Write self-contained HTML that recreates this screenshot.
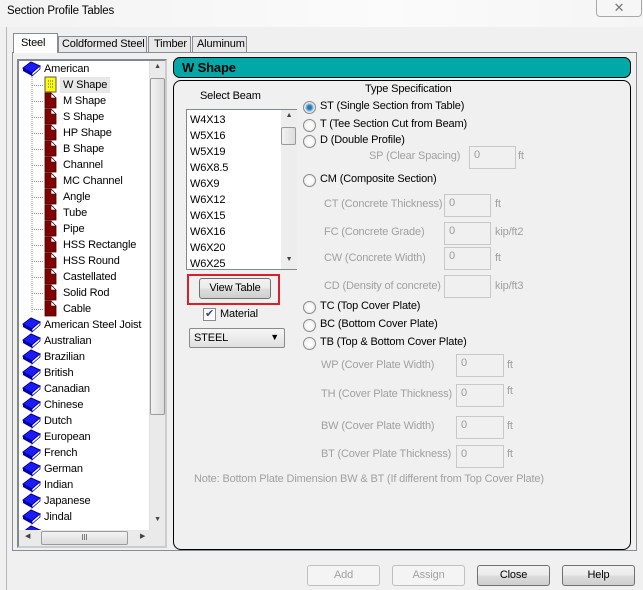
<!DOCTYPE html>
<html><head><meta charset="utf-8"><style>
*{box-sizing:border-box;margin:0;padding:0}
body{width:643px;height:590px;background:#f0f0f0;font-family:"Liberation Sans",Arial,sans-serif;font-size:11px;letter-spacing:-0.15px;color:#000;position:relative;overflow:hidden}
.a{position:absolute;white-space:nowrap}
.g{color:#a0a0a0;z-index:2}
.inp{position:absolute;background:#f0f0f0;border:1px solid #c8c8c8;color:#9a9a9a;padding:2px 4px;height:23px}
.rad{position:absolute;width:13px;height:13px;border-radius:50%;border:1px solid #8a8a8a;background:radial-gradient(circle,#fff 30%,#dcdcdc 100%)}
.btn{position:absolute;height:21px;border:1px solid #707070;border-radius:3px;background:linear-gradient(#f2f2f2,#ebebeb 50%,#dddddd 51%,#cfcfcf);text-align:center;line-height:19px}
.btn.d{border-color:#bfbfbf;background:#f4f4f4;color:#a0a0a0}
.tree div{position:absolute;height:16px;line-height:16px;white-space:nowrap}
</style></head><body>
<div class="a" style="left:0;top:0;width:643px;height:27px;background:linear-gradient(90deg,#f3f3f3,#fbfbfb 60%,#f5f5f5)"></div>
<div class="a" style="left:7px;top:5px;font-size:11.5px">Section Profile Tables</div>
<div class="a" style="left:596px;top:-2px;width:46px;height:19px;border:1px solid #a8a8a8;border-radius:0 0 4px 4px;background:#f6f6f6;text-align:center;line-height:17px;color:#777;font-size:13px">✕</div>
<div class="a" style="left:6px;top:27px;width:1px;height:563px;background:#b8b8b8"></div>

<div class="a" style="left:12px;top:52px;width:625px;height:499px;border:1px solid #898c95;background:#f0f0f0"></div>
<div class="a" style="left:13px;top:33px;width:45px;height:20px;border:1px solid #898c95;border-bottom:none;background:#fff;padding:3px 0 0 7px">Steel</div>
<div class="a" style="left:58px;top:36px;width:89px;height:16px;border:1px solid #898c95;border-bottom:none;background:#e8e8e8;padding:1px 0 0 3px">Coldformed Steel</div>
<div class="a" style="left:148px;top:36px;width:43px;height:16px;border:1px solid #898c95;border-bottom:none;background:#e8e8e8;padding:1px 0 0 5px">Timber</div>
<div class="a" style="left:192px;top:36px;width:55px;height:16px;border:1px solid #898c95;border-bottom:none;background:#e8e8e8;padding:1px 0 0 4px">Aluminum</div>

<div class="a" style="left:17px;top:59px;width:150px;height:489px;border:2px solid #828790;border-right-color:#ccc;border-bottom-color:#ccc;background:#fff;overflow:hidden">
<div class="a" style="left:130px;top:0;width:17px;height:470px;background:#eaeaea;border-left:1px solid #e0e0e0"></div>
<div class="a" style="left:131px;top:2px;width:15px;text-align:center;font-size:7px;color:#444">▲</div>
<div class="a" style="left:131px;top:17px;width:15px;height:337px;border:1px solid #9a9a9a;border-radius:2px;background:linear-gradient(90deg,#f2f2f2,#dcdcdc)"></div>
<div class="a" style="left:131px;top:455px;width:15px;text-align:center;font-size:7px;color:#444">▼</div>
<div class="a" style="left:0;top:469px;width:147px;height:17px;background:#eaeaea"></div>
<div class="a" style="left:22px;top:470px;width:87px;height:14px;border:1px solid #9a9a9a;border-radius:2px;background:linear-gradient(#f2f2f2,#dcdcdc);text-align:center;font-size:8px;line-height:12px;color:#555">III</div>
<div class="a" style="left:6px;top:471px;font-size:7px;color:#444">◀</div>
<div class="a" style="left:121px;top:471px;font-size:7px;color:#444">▶</div>
</div>
<svg class="a" style="left:0;top:0" width="170" height="530">
<defs>
<g id="bk"><path d="M1 7 L9 1 L18 5 L10 12 Z" fill="#1a1aff" stroke="#00008a" stroke-width="1"/><path d="M1 7 L10 12 L10 15 L1 10 Z" fill="#0000a0"/><path d="M10 12 L18 5 L18 8 L10 15Z" fill="#fff" stroke="#00008a" stroke-width=".8"/></g>
<g id="pg"><path d="M0 0 L6 0 L11 5 L11 15 L0 15 Z" fill="#800000" stroke="#400" stroke-width=".8"/><path d="M6 0 L6 5 L11 5 Z" fill="#fff" stroke="#400" stroke-width=".6"/></g>
</defs>
<path d="M32 77 V313" stroke="#999" stroke-dasharray="1 1"/>
<g stroke="#999" stroke-dasharray="1 1">
<path d="M32 85.5H44M32 101.5H44M32 117.5H44M32 133.5H44M32 149.5H44M32 165.5H44M32 181.5H44M32 197.5H44M32 213.5H44M32 229.5H44M32 245.5H44M32 261.5H44M32 277.5H44M32 293.5H44M32 309.5H44"/></g>
<use href="#bk" x="22" y="61"/>
<rect x="45" y="77" width="11" height="15" fill="#ffff00" stroke="#555"/><path d="M48 81h5M48 84h5M48 87h5" stroke="#555" stroke-dasharray="1 1"/>
<use href="#pg" x="45" y="93"/><use href="#pg" x="45" y="109"/><use href="#pg" x="45" y="125"/><use href="#pg" x="45" y="141"/><use href="#pg" x="45" y="157"/><use href="#pg" x="45" y="173"/><use href="#pg" x="45" y="189"/><use href="#pg" x="45" y="205"/><use href="#pg" x="45" y="221"/><use href="#pg" x="45" y="237"/><use href="#pg" x="45" y="253"/><use href="#pg" x="45" y="269"/><use href="#pg" x="45" y="285"/><use href="#pg" x="45" y="301"/>
<use href="#bk" x="22" y="317"/><use href="#bk" x="22" y="333"/><use href="#bk" x="22" y="349"/><use href="#bk" x="22" y="365"/><use href="#bk" x="22" y="381"/><use href="#bk" x="22" y="397"/><use href="#bk" x="22" y="413"/><use href="#bk" x="22" y="429"/><use href="#bk" x="22" y="445"/><use href="#bk" x="22" y="461"/><use href="#bk" x="22" y="477"/><use href="#bk" x="22" y="493"/><use href="#bk" x="22" y="509"/><use href="#bk" x="22" y="525"/>
</svg>
<div class="tree">
<div style="left:44px;top:61px">American</div>
<div style="left:60px;top:77px;background:#e8e8e8;padding:0 3px">W Shape</div>
<div style="left:63px;top:93px">M Shape</div>
<div style="left:63px;top:109px">S Shape</div>
<div style="left:63px;top:125px">HP Shape</div>
<div style="left:63px;top:141px">B Shape</div>
<div style="left:63px;top:157px">Channel</div>
<div style="left:63px;top:173px">MC Channel</div>
<div style="left:63px;top:189px">Angle</div>
<div style="left:63px;top:205px">Tube</div>
<div style="left:63px;top:221px">Pipe</div>
<div style="left:63px;top:237px">HSS Rectangle</div>
<div style="left:63px;top:253px">HSS Round</div>
<div style="left:63px;top:269px">Castellated</div>
<div style="left:63px;top:285px">Solid Rod</div>
<div style="left:63px;top:301px">Cable</div>
<div style="left:44px;top:317px">American Steel Joist</div>
<div style="left:44px;top:333px">Australian</div>
<div style="left:44px;top:349px">Brazilian</div>
<div style="left:44px;top:365px">British</div>
<div style="left:44px;top:381px">Canadian</div>
<div style="left:44px;top:397px">Chinese</div>
<div style="left:44px;top:413px">Dutch</div>
<div style="left:44px;top:429px">European</div>
<div style="left:44px;top:445px">French</div>
<div style="left:44px;top:461px">German</div>
<div style="left:44px;top:477px">Indian</div>
<div style="left:44px;top:493px">Japanese</div>
<div style="left:44px;top:509px">Jindal</div>
</div>

<div class="a" style="left:173px;top:57px;width:458px;height:21px;background:#00a8a8;border:1px solid #000;border-radius:7px;font-weight:bold;font-size:13px;line-height:19px;padding-left:8px">W Shape</div>
<div class="a" style="left:173px;top:80px;width:458px;height:470px;border:1px solid #000;border-radius:8px"></div>

<div class="a" style="left:200px;top:90px">Select Beam</div>
<div class="a" style="left:186px;top:109px;width:111px;height:161px;border:1px solid #828790;background:#fff">
<div class="a" style="left:94px;top:0;width:16px;height:159px;background:#ededed"></div>
<div class="a" style="left:94px;top:2px;width:16px;text-align:center;font-size:7px;color:#444">▲</div>
<div class="a" style="left:94px;top:17px;width:15px;height:18px;border:1px solid #9a9a9a;border-radius:2px;background:linear-gradient(90deg,#f2f2f2,#dcdcdc)"></div>
<div class="a" style="left:94px;top:146px;width:16px;text-align:center;font-size:7px;color:#444">▼</div>
<div class="a" style="left:3px;top:2px;line-height:16px">W4X13<br>W5X16<br>W5X19<br>W6X8.5<br>W6X9<br>W6X12<br>W6X15<br>W6X16<br>W6X20<br>W6X25</div>
</div>
<div class="a" style="left:187px;top:274px;width:93px;height:31px;border:2px solid #d9202a"></div>
<div class="btn" style="left:199px;top:278px;width:72px">View Table</div>
<div class="a" style="left:203px;top:308px;width:13px;height:13px;border:1px solid #8a8a8a;background:#fff;font-size:11px;line-height:11px;text-align:center;color:#2a4a9a">✔</div>
<div class="a" style="left:220px;top:308px">Material</div>
<div class="a" style="left:189px;top:328px;width:96px;height:20px;border:1px solid #8a8a8a;border-radius:2px;background:linear-gradient(#f6f6f6,#e0e0e0);padding:3px 4px">STEEL<span style="position:absolute;right:5px;top:3px;font-size:9px">▼</span></div>

<div class="a" style="left:365px;top:83px">Type Specification</div>
<div class="rad" style="left:303px;top:101px;background:radial-gradient(circle,#2a7ab0 25%,#7fc0e8 45%,#e8e8e8 60%)"></div>
<div class="a" style="left:320px;top:100px">ST (Single Section from Table)</div>
<div class="rad" style="left:303px;top:119px"></div><div class="a" style="left:320px;top:118px">T (Tee Section Cut from Beam)</div>
<div class="rad" style="left:303px;top:135px"></div><div class="a" style="left:320px;top:134px">D (Double Profile)</div>
<div class="a g" style="left:369px;top:150px">SP (Clear Spacing)</div><div class="inp" style="left:469px;top:146px;width:47px">0</div><div class="a g" style="left:518px;top:150px">ft</div>
<div class="rad" style="left:303px;top:174px"></div><div class="a" style="left:320px;top:173px">CM (Composite Section)</div>
<div class="a g" style="left:324px;top:198px">CT (Concrete Thickness)</div><div class="inp" style="left:444px;top:194px;width:47px">0</div><div class="a g" style="left:495px;top:198px">ft</div>
<div class="a g" style="left:324px;top:226px">FC (Concrete Grade)</div><div class="inp" style="left:444px;top:222px;width:47px">0</div><div class="a g" style="left:495px;top:226px">kip/ft2</div>
<div class="a g" style="left:324px;top:252px">CW (Concrete Width)</div><div class="inp" style="left:444px;top:247px;width:47px">0</div><div class="a g" style="left:495px;top:252px">ft</div>
<div class="a g" style="left:324px;top:280px">CD (Density of concrete)</div><div class="inp" style="left:444px;top:275px;width:47px"></div><div class="a g" style="left:495px;top:280px">kip/ft3</div>
<div class="rad" style="left:303px;top:301px"></div><div class="a" style="left:320px;top:300px">TC (Top Cover Plate)</div>
<div class="rad" style="left:303px;top:319px"></div><div class="a" style="left:320px;top:318px">BC (Bottom Cover Plate)</div>
<div class="rad" style="left:303px;top:337px"></div><div class="a" style="left:320px;top:336px">TB (Top &amp; Bottom Cover Plate)</div>
<div class="a g" style="left:321px;top:359px">WP (Cover Plate Width)</div><div class="inp" style="left:456px;top:354px;width:48px">0</div><div class="a g" style="left:507px;top:359px">ft</div>
<div class="a g" style="left:321px;top:388px">TH (Cover Plate Thickness)</div><div class="inp" style="left:456px;top:384px;width:48px">0</div><div class="a g" style="left:507px;top:385px">ft</div>
<div class="a g" style="left:321px;top:420px">BW (Cover Plate Width)</div><div class="inp" style="left:456px;top:416px;width:48px">0</div><div class="a g" style="left:507px;top:420px">ft</div>
<div class="a g" style="left:321px;top:448px">BT (Cover Plate Thickness)</div><div class="inp" style="left:456px;top:445px;width:48px">0</div><div class="a g" style="left:507px;top:448px">ft</div>
<div class="a g" style="left:194px;top:473px">Note: Bottom Plate Dimension BW &amp; BT (If different from Top Cover Plate)</div>

<div class="btn d" style="left:307px;top:565px;width:73px">Add</div>
<div class="btn d" style="left:392px;top:565px;width:73px">Assign</div>
<div class="btn" style="left:477px;top:565px;width:73px">Close</div>
<div class="btn" style="left:562px;top:565px;width:73px">Help</div>
</body></html>
